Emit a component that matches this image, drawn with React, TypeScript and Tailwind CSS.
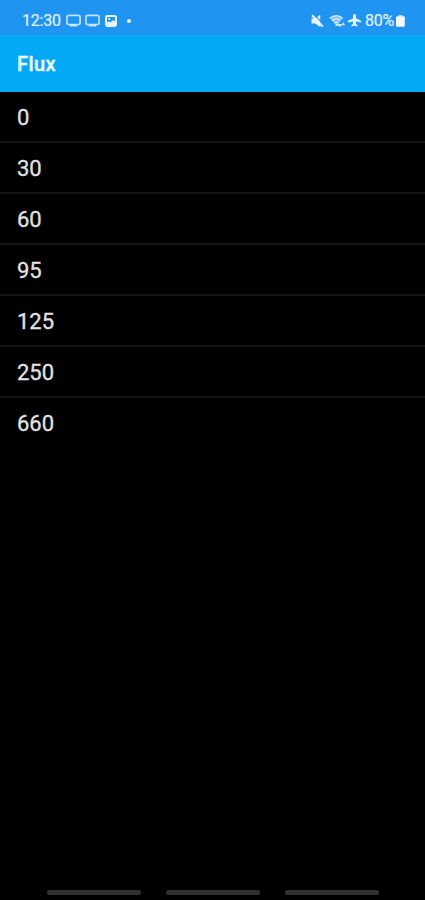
const values = [0, 30, 60, 95, 125, 250, 660];

function CastIcon() {
  return (
    <svg width="15" height="13" viewBox="0 0 15 13" fill="none" className="shrink-0">
      <rect x="0.9" y="1.3" width="13.2" height="9.2" rx="2" stroke="#bfe1fc" strokeWidth="1.7" />
      <path d="M3.8 11.4h7.4" stroke="#d3eafd" strokeWidth="2" />
    </svg>
  );
}

function ImageIcon() {
  return (
    <svg width="12" height="12" viewBox="0 0 12 12" className="shrink-0">
      <rect width="12" height="12" rx="2.4" fill="#e6f4ff" />
      <path d="M2 2h8v4.6L8.2 4.9 5.4 7.4 4 6.2 2 7.8z" fill="#2094f1" />
      <circle cx="4.2" cy="3.8" r="1.1" fill="#e6f4ff" />
    </svg>
  );
}

function MuteIcon() {
  return (
    <svg width="13" height="14" viewBox="0 0 13 14" className="shrink-0">
      <path d="M0.5 4.4h3.6L9.2.8v12.3L4.1 9.6H.5z" fill="#e6f4ff" />
      <path d="M2.8 0 12.8 11" stroke="#2094f1" strokeWidth="1.1" />
      <path d="M1 1.2 11.8 12.6" stroke="#e6f4ff" strokeWidth="2.1" />
    </svg>
  );
}

function WifiIcon() {
  return (
    <svg width="17" height="14" viewBox="0 0 17 14" fill="none" className="shrink-0">
      <path d="M1 4.4Q7.2-1.3 13.4 4.4L8.7 11H7z" fill="#7dc1f7" />
      <path d="M.6 4.3Q7.2-1.2 13.8 4.3M3 6.7Q7.2 3.2 11.4 6.7M5.2 9.2q2-1.8 4 0" stroke="#d9eefe" strokeWidth="1.3" />
      <path d="M6.6 10h3v2h-3z" fill="#d3eafd" />
      <path d="M9 10h4.4l-2.2 3.2zM12.2 11.2h4l-2-3z" fill="#d3eafd" />
    </svg>
  );
}

function PlaneIcon() {
  return (
    <svg width="13" height="13" viewBox="0 0 13 13" className="shrink-0">
      <path
        d="M13 8.4V6.7L8 4.2V1.5a1.5 1.5 0 0 0-3 0v2.7L0 6.7v1.7l5-1v2.5l-1.6 1.3v1.3l3.1-.8 3.1.8v-1.3L8 9.9V7.4z"
        fill="#e6f4ff"
      />
    </svg>
  );
}

function BatteryIcon() {
  return (
    <svg width="9" height="12" viewBox="0 0 9 12" className="shrink-0">
      <path d="M2.4 0h4.2v1.6H2.4z" fill="#b9dffb" />
      <rect y="1.2" width="8.8" height="10.6" rx="1.2" fill="#f1f9ff" />
    </svg>
  );
}

export default function App() {
  return (
    <div className="flex h-[900px] w-[425px] flex-col overflow-hidden bg-black font-['Roboto',sans-serif]">
      <div className="flex h-[35px] shrink-0 items-center justify-between bg-[#2094f1] pt-[7px] pr-5 pb-[1px] pl-[22px] text-[16px] leading-none text-[#e0f2ff]">
        <div className="flex items-center">
          <span className="w-[44px] tracking-[-0.2px] [-webkit-text-stroke:0.2px]">12:30</span>
          <CastIcon />
          <span className="w-[3.5px]" />
          <CastIcon />
          <span className="w-[5.5px]" />
          <ImageIcon />
          <span className="ml-[10px] size-1 rounded-full bg-[#e6f4ff]" />
        </div>
        <div className="flex items-center">
          <MuteIcon />
          <span className="w-[5px]" />
          <WifiIcon />
          <span className="w-[2px]" />
          <PlaneIcon />
          <span className="ml-1 w-[31px] tracking-[-0.2px] [-webkit-text-stroke:0.2px]">80%</span>
          <BatteryIcon />
        </div>
      </div>
      <header className="flex h-[57px] shrink-0 items-center bg-[#03a9f5] pt-px pl-[17px]">
        <h1 className="text-[20px] leading-none font-medium tracking-[0.4px] text-[#eefaff] [-webkit-text-stroke:0.4px]">
          Flux
        </h1>
      </header>
      <ul className="flex-1">
        {values.map((value) => (
          <li
            key={value}
            className="flex h-[51px] items-center border-b-2 border-[#131313] pt-[3px] pl-[17px] text-[22px] leading-none text-[#e2e2e2] [-webkit-text-stroke:0.3px] last:border-transparent"
          >
            {value}
          </li>
        ))}
      </ul>
      <div className="flex h-[10px] shrink-0 gap-[25px] pl-[47px]">
        <span className="h-[5px] w-[94px] rounded-[2px] bg-[#303030]" />
        <span className="h-[5px] w-[94px] rounded-[2px] bg-[#303030]" />
        <span className="h-[5px] w-[94px] rounded-[2px] bg-[#303030]" />
      </div>
    </div>
  );
}
